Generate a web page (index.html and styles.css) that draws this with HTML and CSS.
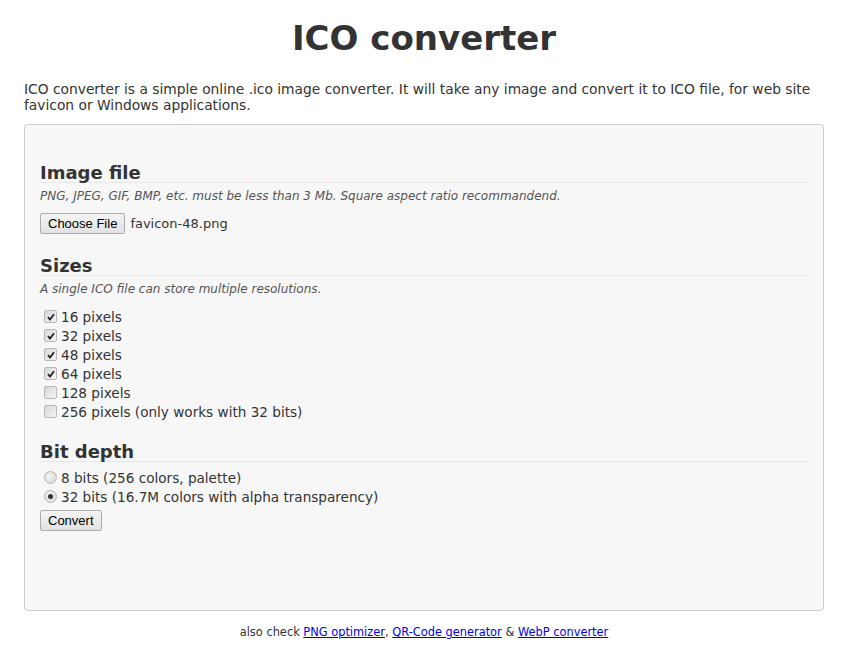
FILE: index.html
```html
<!DOCTYPE html>
<html lang="en">
<head>
  <meta charset="UTF-8" />
  <title>ICO converter</title>
  <link rel="stylesheet" href="styles.css">
</head>
<body>

<div class="page">
  <h1>ICO converter</h1>
  <p class="intro">ICO converter is a simple online .ico image converter. It will take any image and convert it to ICO file, for web site favicon or Windows applications.</p>

  <form class="box">
    <h2>Image file</h2>
    <p class="hint">PNG, JPEG, GIF, BMP, etc. must be less than 3 Mb. Square aspect ratio recommandend.</p>
    <div class="file-row">
      <button type="button" class="btn">Choose File</button>
      <span class="file-name">favicon-48.png</span>
    </div>

    <h2>Sizes</h2>
    <p class="hint">A single ICO file can store multiple resolutions.</p>
    <div class="options">
      <label class="opt"><input type="checkbox" checked><span class="check"><svg viewBox="0 0 8 8"><path d="M1 4.2 L3 6.5 L7 1.3" /></svg></span>16 pixels</label>
      <label class="opt"><input type="checkbox" checked><span class="check"><svg viewBox="0 0 8 8"><path d="M1 4.2 L3 6.5 L7 1.3" /></svg></span>32 pixels</label>
      <label class="opt"><input type="checkbox" checked><span class="check"><svg viewBox="0 0 8 8"><path d="M1 4.2 L3 6.5 L7 1.3" /></svg></span>48 pixels</label>
      <label class="opt"><input type="checkbox" checked><span class="check"><svg viewBox="0 0 8 8"><path d="M1 4.2 L3 6.5 L7 1.3" /></svg></span>64 pixels</label>
      <label class="opt"><input type="checkbox"><span class="check"><svg viewBox="0 0 8 8"><path d="M1 4.2 L3 6.5 L7 1.3" /></svg></span>128 pixels</label>
      <label class="opt"><input type="checkbox"><span class="check"><svg viewBox="0 0 8 8"><path d="M1 4.2 L3 6.5 L7 1.3" /></svg></span>256 pixels (only works with 32 bits)</label>
    </div>

    <h2>Bit depth</h2>
    <div class="options radios">
      <label class="opt"><input type="radio" name="bits"><span class="radio"></span>8 bits (256 colors, palette)</label>
      <label class="opt"><input type="radio" name="bits" checked><span class="radio"></span>32 bits (16.7M colors with alpha transparency)</label>
    </div>
    <button type="button" class="btn">Convert</button>
  </form>

  <p class="footer">also check <a href="#">PNG optimizer</a>, <a href="#">QR-Code generator</a> &amp; <a href="#">WebP converter</a></p>
</div>

</body>
</html>
```

FILE: styles.css
```css
html, body {
  margin: 0; padding: 0;
  background: #fff;
  color: #333;
  font-family: "DejaVu Sans", Verdana, sans-serif;
}

.page {
  width: 800px;
  margin: 0 0 0 24px;
}

h1 {
  margin: 16px 0 0;
  font-size: 34px;
  line-height: 44px;
  text-align: center;
  font-weight: bold;
}

.intro {
  margin: 21px 0 11px;
  font-size: 13.8px;
  line-height: 16px;
}

.box {
  display: block;
  height: 443px;
  padding: 18px 15px 24px;
  background: #f7f7f7;
  border: 1px solid #ccc;
  border-radius: 4px;
}

h2 {
  margin: 20px 0 0;
  font-size: 18px;
  line-height: 19px;
  border-bottom: 1px solid #e8e8e8;
}

.hint {
  margin: 6px 0 10px;
  font-size: 12px;
  font-style: italic;
  color: #555;
}

.file-row {
  display: flex;
  align-items: center;
  gap: 5px;
  padding-bottom: 2px;
  font-size: 13px;
}

.btn {
  padding: 2px 7px;
  font-family: "Liberation Sans", Arial, sans-serif;
  font-size: 13px;
  color: #000;
  background: linear-gradient(#f4f4f4, #e2e2e2);
  border: 1px solid #acacac;
  border-radius: 2px;
}

.options {
  display: flex;
  flex-direction: column;
  margin: 11px 0 0;
  padding-bottom: 1px;
  font-size: 13.6px;
}

.radios {
  margin: 6px 0 3px;
}

.opt {
  display: flex;
  align-items: center;
  height: 19px;
  padding-left: 4px;
}

.opt input {
  display: none;
}

.check {
  width: 11px;
  height: 11px;
  margin-right: 4px;
  border: 1px solid #b8b8b8;
  border-radius: 2px;
  background: linear-gradient(135deg, #d8d8d8, #f4f4f4);
  display: flex;
  align-items: center;
  justify-content: center;
}

.check svg {
  width: 8px;
  height: 8px;
  fill: none;
  stroke: #222;
  stroke-width: 1.8;
  visibility: hidden;
}

.opt input:checked + .check svg {
  visibility: visible;
}

.radio {
  width: 11px;
  height: 11px;
  margin-right: 4px;
  border: 1px solid #b8b8b8;
  border-radius: 50%;
  background: radial-gradient(circle at 40% 40%, #f4f4f4, #d4d4d4);
  display: flex;
  align-items: center;
  justify-content: center;
}

.opt input:checked + .radio::after {
  content: "";
  width: 5px;
  height: 5px;
  border-radius: 50%;
  background: #333;
}

.footer {
  margin: 14px 0;
  text-align: center;
  font-size: 11.4px;
}

.footer a {
  color: #00e;
}
```
